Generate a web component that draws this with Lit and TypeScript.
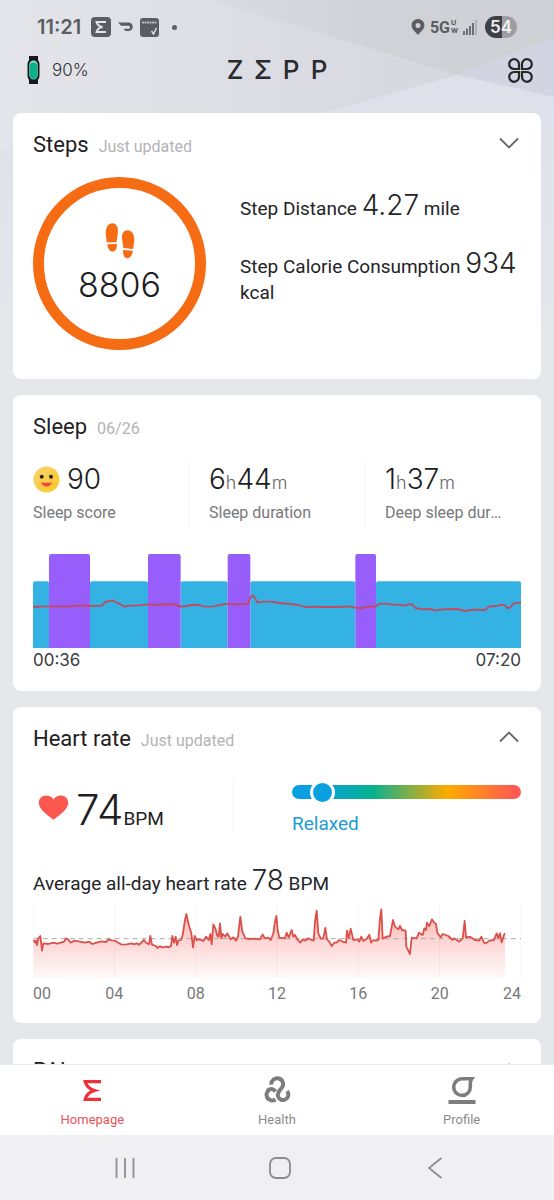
import { LitElement, html, css, svg } from "lit";
import { customElement, property } from "lit/decorators.js";

type Point = [number, number];

const toPath = (points: Point[]) => "M" + points.map(([x, y]) => `${x} ${y}`).join("L");

// Chart samples are stored in plot units: 3 units per CSS pixel at the base width.
const SLEEP_LINE: Point[] = [
  [99, 650], [112, 651], [125, 649], [210, 649], [245, 646], [270, 648], [305, 647], [316, 636],
  [338, 631], [350, 638], [362, 643], [374, 650], [388, 647], [415, 646], [445, 643], [480, 645],
  [500, 642], [525, 643], [540, 650], [560, 648], [578, 645], [598, 645], [612, 650], [640, 649],
  [665, 644], [685, 641], [705, 643], [744, 641], [752, 621], [758, 616], [764, 622], [772, 638],
  [790, 635], [815, 635], [840, 639], [870, 642], [895, 645], [915, 651], [955, 650], [965, 651],
  [1010, 651], [1050, 649], [1070, 654], [1090, 654], [1105, 649], [1125, 650], [1138, 641],
  [1158, 641], [1175, 644], [1195, 644], [1212, 647], [1225, 643], [1237, 643], [1246, 654],
  [1268, 658], [1290, 657], [1308, 661], [1330, 658], [1370, 657], [1397, 663], [1420, 659],
  [1455, 660], [1466, 650], [1490, 648], [1505, 644], [1514, 646], [1524, 655], [1530, 653],
  [1541, 640], [1563, 638],
];

const DEEP_SEGMENTS: Point[] = [[147, 270], [444, 542], [683, 751], [1066, 1128]];
const LIGHT_SEGMENTS: Point[] = [[99, 147], [270, 444], [542, 683], [751, 1066], [1128, 1563]];

const HEART_LINE: Point[] = [
  [101, 150], [105, 158], [108, 152], [111, 165], [115, 145], [121, 138], [126, 182], [130, 160],
  [145, 162], [160, 158], [172, 161], [192, 155], [198, 145], [206, 150], [212, 158], [222, 152],
  [240, 155], [255, 158], [268, 155], [277, 162], [290, 158], [305, 154], [318, 156], [326, 148],
  [335, 151], [345, 152], [355, 158], [365, 164], [380, 163], [395, 160], [402, 163], [410, 160],
  [418, 164], [432, 150], [438, 158], [447, 163], [451, 138], [456, 164], [468, 168], [472, 174],
  [480, 169], [488, 172], [500, 170], [505, 172], [513, 168], [517, 138], [522, 158], [527, 140],
  [531, 165], [535, 152], [543, 150], [548, 135], [555, 90], [559, 72], [563, 90], [568, 110],
  [574, 130], [579, 172], [584, 138], [590, 150], [600, 148], [610, 153], [618, 140], [626, 150],
  [631, 132], [635, 163], [640, 103], [646, 115], [652, 138], [656, 140], [660, 100], [664, 145],
  [668, 132], [676, 140], [682, 130], [692, 148], [700, 142], [708, 152], [714, 140], [721, 80],
  [727, 125], [736, 145], [750, 147], [765, 146], [780, 148], [788, 133], [794, 145], [805, 143],
  [812, 150], [820, 130], [824, 100], [829, 78], [833, 120], [838, 143], [855, 145], [860, 128],
  [866, 142], [875, 120], [880, 140], [885, 135], [892, 148], [901, 158], [908, 148], [915, 152],
  [925, 145], [935, 150], [941, 152], [945, 95], [950, 62], [955, 130], [962, 146], [970, 145],
  [976, 114], [981, 148], [988, 155], [995, 168], [1003, 158], [1010, 158], [1017, 150],
  [1028, 155], [1038, 158], [1041, 122], [1046, 145], [1052, 116], [1060, 150], [1072, 148],
  [1078, 155], [1084, 140], [1090, 153], [1100, 146], [1108, 134], [1113, 158], [1120, 150],
  [1126, 152], [1135, 150], [1140, 85], [1144, 58], [1148, 146], [1160, 140], [1170, 138],
  [1179, 90], [1185, 110], [1195, 118], [1200, 108], [1206, 120], [1217, 122], [1219, 170],
  [1230, 192], [1235, 143], [1250, 145], [1257, 128], [1268, 135], [1273, 115], [1278, 120],
  [1281, 98], [1288, 108], [1296, 88], [1303, 98], [1308, 102], [1312, 128], [1322, 142],
  [1328, 132], [1345, 138], [1358, 150], [1362, 145], [1378, 155], [1388, 145], [1394, 93],
  [1398, 142], [1410, 140], [1425, 150], [1438, 152], [1444, 140], [1452, 158], [1458, 160],
  [1468, 152], [1482, 150], [1490, 130], [1495, 145], [1500, 130], [1505, 157], [1512, 135],
  [1515, 130],
];

const HOURS = ["00", "04", "08", "12", "16", "20", "24"];

@customElement("status-bar")
class StatusBar extends LitElement {
  static styles = css`
    :host {
      display: flex;
      align-items: center;
      justify-content: space-between;
      height: 54px;
      padding: 0 37px;
      font-family: Inter, sans-serif;
      color: #5b5d62;
    }
    .group { display: flex; align-items: center; }
    .left { gap: 7px; }
    .right { gap: 5px; }
    .time { font-size: 20px; font-weight: 600; margin-right: 3px; }
    .network { display: flex; align-items: center; gap: 1px; font-family: Roboto, sans-serif; font-weight: 700; font-size: 16px; }
    .band { display: flex; flex-direction: column; font-size: 8px; line-height: 8px; }
    .battery {
      display: grid;
      place-items: center;
      width: 32px;
      height: 22px;
      margin-left: 3px;
      border-radius: 11px;
      background: linear-gradient(90deg, #3e4045 54%, #9d9ea3 54%);
      color: #f0f0f2;
      font-size: 17px;
      font-weight: 600;
    }
    .dot { margin-left: 6px; }
    svg { display: block; }
  `;

  render() {
    return html`
      <div class="group left">
        <span class="time">11:21</span>
        <svg width="20" height="20" viewBox="0 0 20 20" aria-hidden="true">
          <rect width="20" height="20" rx="4" fill="#5b5d62" />
          <path d="M15 5H5.5q1 4 6 5-5 1-6 5H15" fill="none" stroke="#e4e5ea" stroke-width="2" />
        </svg>
        <svg width="15" height="10" viewBox="0 0 15 10" aria-hidden="true">
          <path d="M0 .5h10.500a4.300 4.300 0 0 1 0 8.600H7.500L5.500 6.800h5a1.500 1.500 0 0 0 0-3.100H3Z" fill="#5b5d62" />
        </svg>
        <svg width="19" height="19" viewBox="0 0 19 19" aria-hidden="true">
          <rect width="19" height="19" rx="3" fill="#5b5d62" />
          <path d="M2 4.500h15" stroke="#b9babf" stroke-width="2" stroke-dasharray="2 .5" />
          <path d="M11.500 13l2 3 3-6" fill="none" stroke="#e4e5ea" stroke-width="1.400" />
        </svg>
        <svg class="dot" width="5" height="5" viewBox="0 0 5 5" aria-hidden="true">
          <circle cx="2.500" cy="2.500" r="2.500" fill="#5b5d62" />
        </svg>
      </div>
      <div class="group right">
        <svg width="14" height="16" viewBox="0 0 14 16" aria-hidden="true">
          <path d="M7 0a6.400 6.400 0 0 1 6.400 6.400C13.400 10.500 9 13 7 16 5 13 .6 10.500 .6 6.400A6.400 6.400 0 0 1 7 0Zm0 4a2.500 2.500 0 1 0 0 5 2.500 2.500 0 0 0 0-5Z" fill="#5b5d62" fill-rule="evenodd" />
        </svg>
        <span class="network">5G<span class="band"><span>U</span><span>W</span></span></span>
        <svg width="14" height="16" viewBox="0 0 14 16" aria-hidden="true">
          <path d="M1 16v-4M4 16V9.500M7 16V7M10 16V4" stroke="#5b5d62" stroke-width="1.700" />
          <path d="M13 16V1" stroke="#a9abb0" stroke-width="1.700" />
        </svg>
        <span class="battery">54</span>
      </div>
    `;
  }
}

@customElement("app-header")
class AppHeader extends LitElement {
  static styles = css`
    :host {
      display: grid;
      grid-template-columns: 1fr auto 1fr;
      align-items: center;
      padding: 0 21px;
      height: 32px;
      font-family: Inter, sans-serif;
      color: #2a2b2f;
    }
    .device { display: flex; align-items: center; gap: 12px; margin-left: 6px; font-size: 17px; font-weight: 300; color: #2f3034; }
    .brand { display: flex; gap: 10px; margin: 0; font-size: 26px; line-height: 32px; font-weight: 500; }
    .brand span { width: 18px; text-align: center; }
    button { justify-self: end; padding: 0; border: 0; background: none; cursor: pointer; }
    svg { display: block; }
  `;

  render() {
    return html`
      <div class="device">
        <svg width="13" height="28" viewBox="0 0 13 28" aria-hidden="true">
          <path d="M2 0h9v5H2zM2 23h9v5H2z" fill="#17191d" />
          <rect x=".5" y="2.500" width="12" height="23" rx="5.500" fill="#17191d" />
          <rect x="2.300" y="4.500" width="8.400" height="19" rx="4.200" fill="#8fdcc6" />
          <rect x="2.800" y="6.500" width="7.400" height="16.500" rx="3.500" fill="#0bb18a" />
        </svg>
        <span>90%</span>
      </div>
      <h1 class="brand" aria-label="Zepp"><span>Z</span><span>Σ</span><span>P</span><span>P</span></h1>
      <button aria-label="More">
        <svg width="25" height="25" viewBox="0 0 25 25" fill="none" stroke="#26272b" stroke-width="2.200">
          <path d="M11 11H6.200A4.900 4.900 0 1 1 11 6.200Z" />
          <path d="M14 11h4.800A4.900 4.900 0 1 0 14 6.200Z" />
          <path d="M11 14H6.200A4.900 4.900 0 1 0 11 18.800Z" />
          <path d="M14 14h4.800A4.900 4.900 0 1 1 14 18.800Z" />
        </svg>
      </button>
    `;
  }
}

@customElement("info-card")
class InfoCard extends LitElement {
  @property() heading = "";
  @property() note = "";
  @property() chevron = "";

  static styles = css`
    :host {
      display: block;
      padding: 20px 20px 0;
      border-radius: 8px;
      background: #fff;
    }
    header { display: flex; align-items: baseline; gap: 10px; height: 24px; }
    h2 { margin: 0; font-size: 22px; line-height: 24px; font-weight: 400; color: #1f2023; }
    .note { flex: 1; font-size: 16px; line-height: 24px; color: #b3b3b5; }
    button { align-self: center; padding: 2px; margin: -4px 0 0; border: 0; background: none; cursor: pointer; }
    svg { display: block; }
  `;

  render() {
    const path = this.chevron === "up" ? "M1 10.500l9-9 9 9" : "M1 1.500l9 9 9-9";
    return html`
      <header>
        <h2>${this.heading}</h2>
        <span class="note">${this.note}</span>
        ${this.chevron
          ? html`<button aria-label="Toggle ${this.heading}">
              <svg width="20" height="12" viewBox="0 0 20 12">
                <path d=${path} fill="none" stroke="#66676a" stroke-width="1.800" />
              </svg>
            </button>`
          : null}
      </header>
      <slot></slot>
    `;
  }
}

@customElement("steps-card")
class StepsCard extends LitElement {
  static styles = css`
    :host { display: block; }
    .body { display: flex; gap: 34px; padding: 20px 0 29px; }
    .ring {
      flex: none;
      display: flex;
      flex-direction: column;
      align-items: center;
      justify-content: center;
      gap: 7px;
      box-sizing: border-box;
      width: 173px;
      height: 173px;
      border: 11px solid #f66c14;
      border-radius: 50%;
    }
    .count { font: 300 34px/38px Inter, sans-serif; color: #1c1d20; }
    .facts { display: flex; flex-direction: column; gap: 31px; padding-top: 18px; }
    p { margin: 0; font-size: 19px; line-height: 26px; color: #232427; }
    .num { font: 300 28px/20px Inter, sans-serif; }
    svg { display: block; }
  `;

  render() {
    return html`
      <info-card heading="Steps" note="Just updated" chevron="down">
        <div class="body">
          <div class="ring">
            <svg width="30" height="36" viewBox="0 0 30 36" fill="#f66c14" aria-hidden="true">
              <path d="M7 .3C10.500 0 12.800 3 12.900 7c.1 4-.8 8-1.300 12.200L1.800 19.500C1.500 15 .6 13 .8 9 1 4 3.500 .6 7 .3Z" />
              <path d="M2.300 21.200l9.500-.3c.4 4-1 7.300-3.700 7.600-3.500 .3-5.300-3-5.800-7.300Z" />
              <path d="M22.500 7.300c3.500-.1 6.500 3 6.800 8.500.2 4-.9 6-1.200 10.300l-9.800-1C18 20.500 17 17.500 17 14c.1-4 2-6.600 5.500-6.700Z" />
              <path d="M18.200 27l9.600 .7c-.5 4.500-2.800 7.800-5.800 7.500-3-.2-4.300-4-3.800-8.200Z" />
            </svg>
            <span class="count">8806</span>
          </div>
          <div class="facts">
            <p>Step Distance <span class="num">4.27</span> mile</p>
            <p>Step Calorie Consumption <span class="num">934</span> kcal</p>
          </div>
        </div>
      </info-card>
    `;
  }
}

@customElement("sleep-card")
class SleepCard extends LitElement {
  static styles = css`
    :host { display: block; }
    .stats { display: grid; grid-template-columns: 156fr 176fr 156fr; padding-top: 19px; }
    .stat { box-sizing: border-box; min-width: 0; height: 70px; padding-top: 4px; }
    .stat + .stat { padding-left: 19px; border-left: 1px solid #f7f7f8; }
    .stat:last-child { padding-right: 16px; }
    .value { display: flex; align-items: baseline; height: 34px; font: 300 28px/34px Inter, sans-serif; color: #1c1d20; }
    .value svg { align-self: center; margin-right: 7px; }
    .unit { font-size: 18px; color: #66676a; }
    .label { font-size: 16px; line-height: 34px; color: #77787b; white-space: nowrap; overflow: hidden; text-overflow: ellipsis; }
    .chart { display: block; width: 100%; height: 94px; margin-top: 26px; }
    .range { display: flex; justify-content: space-between; padding: 1px 0 20px; font: 400 17px/22px Inter, sans-serif; color: #3a3b3f; }
  `;

  render() {
    return html`
      <info-card heading="Sleep" note="06/26">
        <div class="stats">
          <div class="stat">
            <div class="value">
              <svg width="27" height="27" viewBox="0 0 27 27" aria-hidden="true">
                <defs>
                  <linearGradient id="face" x1="0" y1="0" x2="1" y2="1">
                    <stop offset="0" stop-color="#f8d36e" />
                    <stop offset="1" stop-color="#fdc726" />
                  </linearGradient>
                </defs>
                <circle cx="13.500" cy="13.500" r="13" fill="url(#face)" />
                <circle cx="8.700" cy="10.800" r="2" fill="#2b2412" />
                <circle cx="18" cy="10.800" r="2" fill="#2b2412" />
                <path d="M8 16.200q5.500 1.200 11 0-1.500 4.300-5.500 4.300T8 16.200Z" fill="#f0473a" />
              </svg>
              <span>90</span>
            </div>
            <div class="label">Sleep score</div>
          </div>
          <div class="stat">
            <div class="value">6<span class="unit">h</span>44<span class="unit">m</span></div>
            <div class="label">Sleep duration</div>
          </div>
          <div class="stat">
            <div class="value">1<span class="unit">h</span>37<span class="unit">m</span></div>
            <div class="label">Deep sleep duration</div>
          </div>
        </div>
        <svg class="chart" viewBox="99 492 1464 282" preserveAspectRatio="none" role="img" aria-label="Sleep stages">
          ${LIGHT_SEGMENTS.map(([a, b]) => svg`<path d="M${a} 774V580q0-6 6-6H${b - 6}q6 0 6 6V774Z" fill="#34b2e4" />`)}
          ${DEEP_SEGMENTS.map(([a, b]) => svg`<path d="M${a} 774V498q0-6 6-6H${b - 6}q6 0 6 6V774Z" fill="#985efb" />`)}
          <path d=${toPath(SLEEP_LINE)} fill="none" stroke="#c24a5c" stroke-width="1.800" stroke-linejoin="round" vector-effect="non-scaling-stroke" />
        </svg>
        <div class="range"><span>00:36</span><span>07:20</span></div>
      </info-card>
    `;
  }
}

@customElement("heart-card")
class HeartCard extends LitElement {
  static styles = css`
    :host { display: block; }
    .now { display: grid; grid-template-columns: 200fr 288fr; padding-top: 28px; }
    .bpm { display: flex; align-items: baseline; height: 56px; padding-left: 5px; font-size: 19px; color: #1f2023; }
    .bpm svg { align-self: center; margin-right: 7px; }
    .big { font: 300 42px/62px Inter, sans-serif; }
    .zone { height: 54px; padding-left: 58px; border-left: 1px solid #f4f4f5; }
    input {
      -webkit-appearance: none;
      appearance: none;
      display: block;
      width: 100%;
      height: 14px;
      margin: 6px 0 0;
      border-radius: 7px;
      background: linear-gradient(90deg, #0a9fdf 12%, #06b18e 35%, #ffab00 68%, #ff5a52 97%);
    }
    input::-webkit-slider-thumb {
      -webkit-appearance: none;
      box-sizing: border-box;
      width: 25px;
      height: 25px;
      border: 3px solid #fff;
      border-radius: 50%;
      background: #0a9fdf;
    }
    label { display: block; padding-top: 13px; font-size: 19px; line-height: 24px; color: #1b9cd2; }
    .average { margin: 0; padding-top: 35px; font-size: 19px; line-height: 26px; color: #232427; }
    .num { font: 300 28px/20px Inter, sans-serif; }
    .chart { display: block; width: 100%; height: 74px; margin-top: 7px; }
    .hours { display: flex; padding: 5px 0 18px; font-size: 16px; line-height: 22px; color: #77787b; }
    .hours span { flex: 2; text-align: center; }
    .hours span:first-child { flex: 1; text-align: left; }
    .hours span:last-child { flex: 1; text-align: right; }
  `;

  render() {
    const line = toPath(HEART_LINE);
    return html`
      <info-card heading="Heart rate" note="Just updated" chevron="up">
        <div class="now">
          <div class="bpm">
            <svg width="31" height="25" viewBox="0 0 31 25" aria-hidden="true">
              <path d="M15.500 24.800C10 20.500 .8 14.500 .8 7.800 .8 3.400 4.200 .6 8 .6c3.200 0 6 1.600 7.500 4C17 2.200 19.800 .6 23 .6c3.800 0 7.200 2.800 7.200 7.200 0 6.700-9.200 12.700-14.700 17Z" fill="#fb574f" />
            </svg>
            <span class="big">74</span>BPM
          </div>
          <div class="zone">
            <input id="zone" type="range" min="0" max="1000" value="86" />
            <label for="zone">Relaxed</label>
          </div>
        </div>
        <p class="average">Average all-day heart rate <span class="num">78</span> BPM</p>
        <svg class="chart" viewBox="99 42 1464 222" preserveAspectRatio="none" role="img" aria-label="Heart rate over the day">
          <defs>
            <linearGradient id="fade" gradientUnits="userSpaceOnUse" x1="0" y1="60" x2="0" y2="264">
              <stop offset="0" stop-color="#fcb4b0" />
              <stop offset=".45" stop-color="#fdd5d4" />
              <stop offset="1" stop-color="#fffafa" />
            </linearGradient>
          </defs>
          <path d="${line}V264H101Z" fill="url(#fade)" />
          ${HOURS.map((_, i) => svg`<path d="M${100 + i * 243.7} 42V264" stroke="#000" stroke-opacity=".04" vector-effect="non-scaling-stroke" />`)}
          <path d="M101 146H1563" stroke="#aaa" stroke-width="1" stroke-dasharray="5 4" vector-effect="non-scaling-stroke" />
          <path d=${line} fill="none" stroke="#dc5049" stroke-width="1.800" stroke-linejoin="round" vector-effect="non-scaling-stroke" />
        </svg>
        <div class="hours">${HOURS.map((h) => html`<span>${h}</span>`)}</div>
      </info-card>
    `;
  }
}

@customElement("tab-bar")
class TabBar extends LitElement {
  static styles = css`
    :host { display: block; border-top: 1px solid #ececee; background: #fff; }
    nav { display: flex; }
    a {
      flex: 1;
      display: flex;
      flex-direction: column;
      align-items: center;
      gap: 6px;
      padding: 11px 0 5px;
      font-size: 13px;
      line-height: 20px;
      color: #8b8c8e;
      text-decoration: none;
    }
    .active { color: #ec5257; }
    svg { display: block; }
  `;

  render() {
    return html`
      <nav>
        <a class="active" href="#home">
          <svg width="28" height="28" viewBox="0 0 28 28" fill="none" stroke="#ee2f3c" stroke-width="3.200" aria-hidden="true">
            <path d="M23 5.600H7.200q1.500 6.600 9.300 8.900-7.800 2.300-9.300 8.900H23" />
          </svg>
          Homepage
        </a>
        <a href="#health">
          <svg width="28" height="28" viewBox="0 0 28 28" fill="none" stroke="#7d7d7f" stroke-width="4" aria-hidden="true">
            <path d="M8.300 8.600A5.900 5.900 0 1 1 18.600 12C16.800 14 14.800 15.500 14.800 19.500A5.300 5.300 0 1 0 24 15.200" />
            <path d="M4.500 14.800Q9 11 12.500 15.500" />
            <path d="M6 14A5.700 5.700 0 1 0 12.500 23.500" />
          </svg>
          Health
        </a>
        <a href="#profile">
          <svg width="28" height="28" viewBox="0 0 28 28" fill="none" stroke="#7d7d7f" aria-hidden="true">
            <path d="M23.600 2.800H14A8.300 8.300 0 1 0 22.300 11V7.500Q22.300 4.500 23.600 2.800Z" stroke-width="3.600" />
            <path d="M.5 26h27" stroke-width="4" />
          </svg>
          Profile
        </a>
      </nav>
    `;
  }
}

@customElement("system-bar")
class SystemBar extends LitElement {
  static styles = css`
    :host { display: flex; padding: 0 42px 0 47px; background: #f0f0f3; }
    button { flex: 1; display: grid; place-items: center; height: 65px; padding: 0; border: 0; background: none; cursor: pointer; }
  `;

  render() {
    return html`
      <button aria-label="Recent apps">
        <svg width="24" height="24" viewBox="0 0 24 24"><path d="M3.500 2v20M12 2v20M20.500 2v20" stroke="#8b8c8f" stroke-width="1.800" /></svg>
      </button>
      <button aria-label="Home">
        <svg width="24" height="24" viewBox="0 0 24 24"><rect x="2" y="2" width="20" height="20" rx="6" fill="none" stroke="#8b8c8f" stroke-width="1.800" /></svg>
      </button>
      <button aria-label="Back">
        <svg width="24" height="24" viewBox="0 0 24 24"><path d="M18.500 2L6 12l12.500 10" fill="none" stroke="#8b8c8f" stroke-width="1.800" /></svg>
      </button>
    `;
  }
}

@customElement("app-root")
class AppRoot extends LitElement {
  static styles = css`
    :host {
      display: flex;
      flex-direction: column;
      height: 100vh;
      overflow: hidden;
      font-family: Roboto, sans-serif;
      background:
        url("data:image/svg+xml,%3Csvg xmlns='http://www.w3.org/2000/svg' viewBox='0 0 554 330' preserveAspectRatio='none'%3E%3Cdefs%3E%3ClinearGradient id='a' x2='1'%3E%3Cstop offset='0' stop-color='rgb(228,229,234)'/%3E%3Cstop offset='.6' stop-color='rgb(218,219,226)'/%3E%3Cstop offset='1' stop-color='rgb(212,213,219)'/%3E%3C/linearGradient%3E%3ClinearGradient id='b' x1='0' x2='1'%3E%3Cstop offset='0' stop-color='rgb(214,217,222)' stop-opacity='0'/%3E%3Cstop offset='.6' stop-color='rgb(208,210,215)'/%3E%3Cstop offset='1' stop-color='rgb(206,208,213)'/%3E%3C/linearGradient%3E%3ClinearGradient id='d' x2='0' y2='1'%3E%3Cstop offset='0' stop-color='rgb(230,231,235)' stop-opacity='0'/%3E%3Cstop offset='1' stop-color='rgb(230,231,235)'/%3E%3C/linearGradient%3E%3C/defs%3E%3Cpath fill='url(%23a)' d='M0 0h554v330H0z'/%3E%3Cpath fill='url(%23b)' d='M120 0H554V38L457 75 277 20 210 0z'/%3E%3Cpath fill='rgb(210,213,225)' d='M554 38V97L457 75z'/%3E%3Cpath fill='rgb(223,225,234)' d='M457 75L554 97V330H0V150Q250 120 335 110z'/%3E%3Cpath fill='url(%23d)' d='M0 110h554v220H0z'/%3E%3C/svg%3E") top / 100% 330px no-repeat,
        #e6e7eb;
    }
    main {
      flex: 1;
      min-height: 0;
      display: flex;
      flex-direction: column;
      gap: 16px;
      margin-top: 27px;
      padding: 0 13px;
      overflow-y: auto;
      scrollbar-width: none;
    }
    main > * { flex: none; }
    .pai { padding-bottom: 120px; }
  `;

  render() {
    return html`
      <status-bar></status-bar>
      <app-header></app-header>
      <main>
        <steps-card></steps-card>
        <sleep-card></sleep-card>
        <heart-card></heart-card>
        <info-card class="pai" heading="PAI" note="Just updated" chevron="up"></info-card>
      </main>
      <tab-bar></tab-bar>
      <system-bar></system-bar>
    `;
  }
}
